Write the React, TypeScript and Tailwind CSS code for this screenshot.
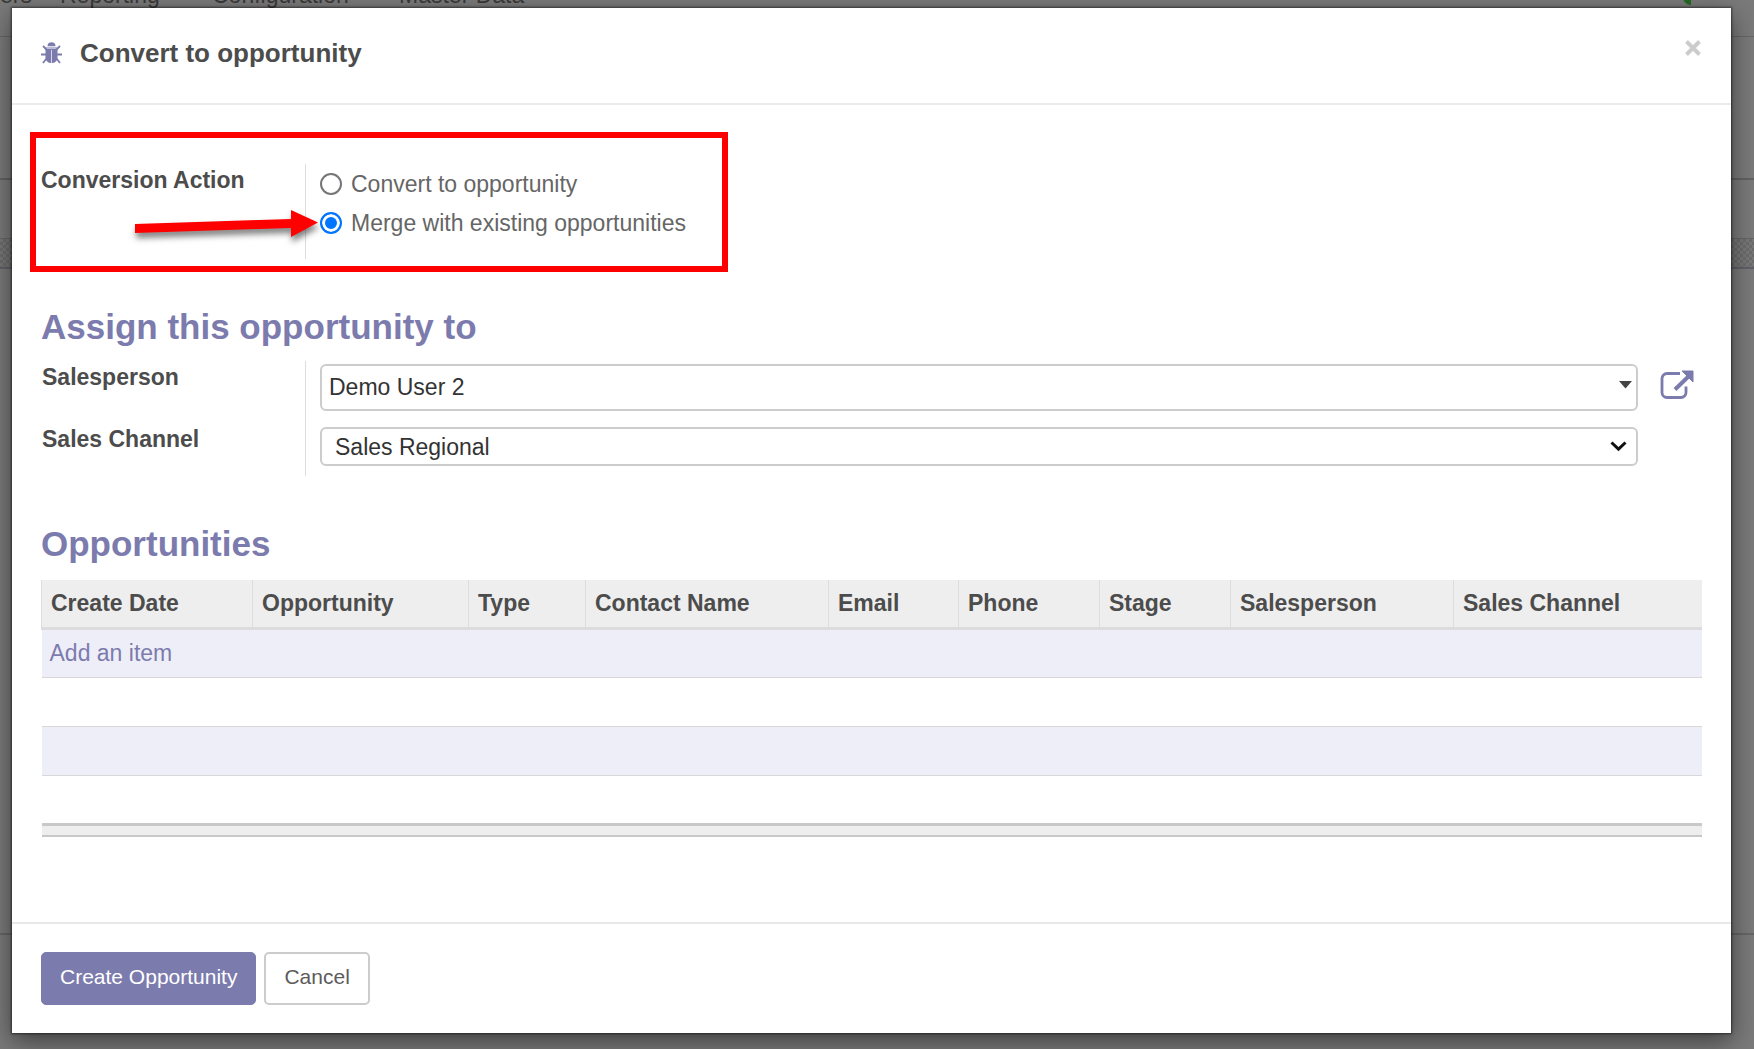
import type { ReactNode } from "react";

const columns = [
  { label: "Create Date", width: "w-[211px]" },
  { label: "Opportunity", width: "w-[216px]" },
  { label: "Type", width: "w-[117px]" },
  { label: "Contact Name", width: "w-[243px]" },
  { label: "Email", width: "w-[130px]" },
  { label: "Phone", width: "w-[141px]" },
  { label: "Stage", width: "w-[131px]" },
  { label: "Salesperson", width: "w-[223px]" },
  { label: "Sales Channel", width: "" },
];

export default function App() {
  return (
    <div className="relative min-h-screen overflow-hidden bg-[#7a7a7a] font-['Liberation_Sans',Arial,sans-serif] text-[23px] leading-8 text-[#4c4c4c]">
      <Backdrop />

      {/* Modal */}
      <div className="relative px-3 pt-2 pb-4">
        <div
          role="dialog"
          aria-labelledby="dialog-title"
          className="mr-[11px] bg-white shadow-[0_0_2px_1px_rgba(0,0,0,0.5),0_8px_24px_rgba(0,0,0,0.5)]"
        >
          <header className="flex h-[97px] items-start justify-between border-b-2 border-[#ebebeb] pt-[29px] pr-[30px] pl-[29px]">
            <div className="flex items-center gap-[18px]">
              <BugIcon />
              <h1 id="dialog-title" className="text-[26px] font-bold">Convert to opportunity</h1>
            </div>
            <button type="button" aria-label="Close" className="mt-[3px] text-[#cccccc]">
              <CloseIcon />
            </button>
          </header>

          <main className="pt-[27px] pr-[29px] pl-[18px]">
            {/* Conversion action */}
            <div
              role="radiogroup"
              aria-labelledby="conversion-label"
              className="relative flex h-[140px] w-[698px] border-6 border-[#ff0000] pt-[26px] pl-[5px]"
            >
              <div id="conversion-label" className="w-[264px] font-bold">Conversion Action</div>
              <div className="h-[95px] border-l border-[#dddddd] pl-3.5">
                <Radio id="convert" label="Convert to opportunity" />
                <Radio id="merge" label="Merge with existing opportunities" checked />
              </div>
              <Arrow />
            </div>

            <div className="pl-[11px]">
              <SectionTitle>Assign this opportunity to</SectionTitle>
              <div className="mb-[13px] flex">
                <div className="flex w-[265px] shrink-0 flex-col gap-[30px] border-r border-[#dddddd] pl-px font-bold">
                  <label htmlFor="salesperson">Salesperson</label>
                  <label htmlFor="channel">Sales Channel</label>
                </div>
                <div className="flex flex-1 flex-col gap-4 pt-[3px] pb-[10px] pl-[14px]">
                  <div className="flex items-start">
                    <div className="relative flex-1">
                      <input
                        id="salesperson"
                        type="text"
                        defaultValue="Demo User 2"
                        className="block h-[47px] w-full rounded-md border-2 border-[#cccccc] bg-white px-[7px] text-[#333333]"
                      />
                      <svg aria-hidden="true" className="pointer-events-none absolute top-[17px] right-1.5 h-2 w-[13px]" viewBox="0 0 13 8" fill="#444">
                        <path d="M0 0h13L6.500 7.500z" />
                      </svg>
                    </div>
                    <a href="#" aria-label="Open salesperson" className="mt-1.5 mr-[7px] ml-[22px] text-[#7c7bad]">
                      <ExternalLinkIcon />
                    </a>
                  </div>
                  <div className="relative mr-[64px]">
                    <select
                      id="channel"
                      className="block h-[39px] w-full appearance-none rounded-md border-2 border-[#cccccc] bg-white px-[13px] text-[#333333]"
                    >
                      <option>Sales Regional</option>
                    </select>
                    <svg aria-hidden="true" className="pointer-events-none absolute top-3.5 right-[11px] h-[11px] w-[17px]" viewBox="0 0 17 11" fill="none" stroke="#111" strokeWidth="3">
                      <path d="M1.500 1.500L8.500 8.200L15.500 1.500" />
                    </svg>
                  </div>
                </div>
              </div>

              <SectionTitle>Opportunities</SectionTitle>
              <table className="mt-0.5 w-full table-fixed border-collapse">
                <thead>
                  <tr className="h-12 border-b-3 border-[#dcdcdc] bg-[#eeeeee]">
                    {columns.map((column) => (
                      <th key={column.label} className={`${column.width} border-l border-l-[#dddddd] pl-[9px] text-left font-bold whitespace-nowrap`}>
                        {column.label}
                      </th>
                    ))}
                  </tr>
                </thead>
                <tbody>
                  <tr className="h-[49px] border-b border-[#d8d8d8] bg-[#eeeef8]">
                    <td colSpan={9} className="pl-2">
                      <a href="#" className="text-[#7c7bad]">Add an item</a>
                    </td>
                  </tr>
                  <tr className="h-[49px] border-b border-[#d8d8d8]"><td colSpan={9} /></tr>
                  <tr className="h-[49px] border-b border-[#d8d8d8] bg-[#eeeef8]"><td colSpan={9} /></tr>
                  <tr className="h-[49px]"><td colSpan={9} /></tr>
                </tbody>
                <tfoot>
                  <tr className="h-3 border-t-3 border-b-2 border-[#c8c8c8] bg-[#eeeeee]"><td colSpan={9} /></tr>
                </tfoot>
              </table>
            </div>
          </main>

          <footer className="mt-[85px] flex gap-2 border-t-2 border-[#e8e8e8] px-[29px] py-7 text-[21px]">
            <button type="button" className="h-[53px] rounded-[5px] border border-[#7c7bad] bg-[#7c7bad] px-[18px] pb-1 text-white">
              Create Opportunity
            </button>
            <button type="button" className="h-[53px] rounded-[5px] border-2 border-[#cccccc] bg-white px-[18px] pb-1 text-[#5c5c5c]">
              Cancel
            </button>
          </footer>
        </div>
      </div>
    </div>
  );
}

// Dimmed page that stays visible around the modal
function Backdrop() {
  return (
    <div aria-hidden="true" className="absolute inset-0 flex flex-col">
      <div className="relative flex h-[37px] shrink-0 items-start overflow-hidden border-b border-[#666666] text-[#3a3a3a]">
        <div className="-mt-[21px] flex">
          <span className="w-[60px]">ers</span>
          <span className="w-[152px]">Reporting</span>
          <span className="w-[187px]">Configuration</span>
          <span>Master Data</span>
        </div>
        <span className="absolute -top-3 right-[63px] h-[17px] w-2 rounded-l-full bg-[#236b23]" />
      </div>
      <div className="h-[143px] shrink-0 border-b-2 border-[#626262]" />
      <div className="h-[59px] shrink-0 border-b border-[#666666]" />
      <div className="h-[30px] shrink-0 border-b-2 border-[#60606a] bg-[repeating-conic-gradient(#6c6c6c_0_25%,#787878_0_50%)] bg-size-[6px_6px]" />
      <div className="h-[666px] shrink-0 border-b-2 border-[#666666]" />
    </div>
  );
}

function SectionTitle({ children }: { children: ReactNode }) {
  return <h2 className="pt-[35px] pb-3.5 text-[35px] leading-10 font-bold text-[#7c7bad]">{children}</h2>;
}

function Radio({ id, label, checked = false }: { id: string; label: string; checked?: boolean }) {
  return (
    <div className="flex h-[39px] items-center gap-[9px]">
      <input
        id={id}
        type="radio"
        name="conversion-action"
        defaultChecked={checked}
        className="h-[22px] w-[22px] appearance-none rounded-full border-2 border-[#767676] bg-white checked:border-[#0075ff] checked:bg-[#0075ff] checked:shadow-[inset_0_0_0_3px_white]"
      />
      <label htmlFor={id} className="text-[#666666]">{label}</label>
    </div>
  );
}

function Arrow() {
  return (
    <svg
      aria-hidden="true"
      className="pointer-events-none absolute top-[70px] left-[98px] h-10 w-[190px] drop-shadow-[1px_5px_3px_rgba(0,0,0,0.5)]"
      viewBox="0 0 190 40"
      fill="#ff0000"
    >
      <path d="M1 16L157 11V2L184 14.500L157 29V20L1 25z" />
    </svg>
  );
}

function BugIcon() {
  return (
    <svg aria-hidden="true" className="h-[22px] w-[21px] text-[#7c7bad]" viewBox="0 0 21 22" fill="currentColor">
      <path d="M6.500 4.200a4 4 0 0 1 8 0z" />
      <path d="M4.500 5.500h12v10c0 3.500-2.500 5.500-6 5.500s-6-2-6-5.500z" />
      <path d="M10.500 8v13" stroke="#fff" strokeWidth="1" opacity="0.7" />
      <path d="M4.500 6.500h12" stroke="#fff" strokeWidth="1" opacity="0.5" />
      <path d="M2 4l3.500 3.500M19 4l-3.500 3.500M0 12.500h5M21 12.500h-5M5.500 16.500L2 21M15.500 16.500L19 21" stroke="currentColor" strokeWidth="1.800" />
    </svg>
  );
}

function CloseIcon() {
  return (
    <svg aria-hidden="true" className="h-4 w-4" viewBox="0 0 16 16" stroke="currentColor" strokeWidth="4">
      <path d="M1.500 1.500l13 13M14.500 1.500l-13 13" />
    </svg>
  );
}

function ExternalLinkIcon() {
  return (
    <svg aria-hidden="true" className="h-[30px] w-[35px]" viewBox="0 0 35 30" fill="none" stroke="currentColor">
      <path d="M20 3.500H7a5 5 0 0 0-5 5v14a5 5 0 0 0 5 5h14a5 5 0 0 0 5-5v-6" strokeWidth="2.800" />
      <path d="M15 19.500L30 5" strokeWidth="4" />
      <path d="M22 1h11v11z" fill="currentColor" strokeWidth="1" />
    </svg>
  );
}
